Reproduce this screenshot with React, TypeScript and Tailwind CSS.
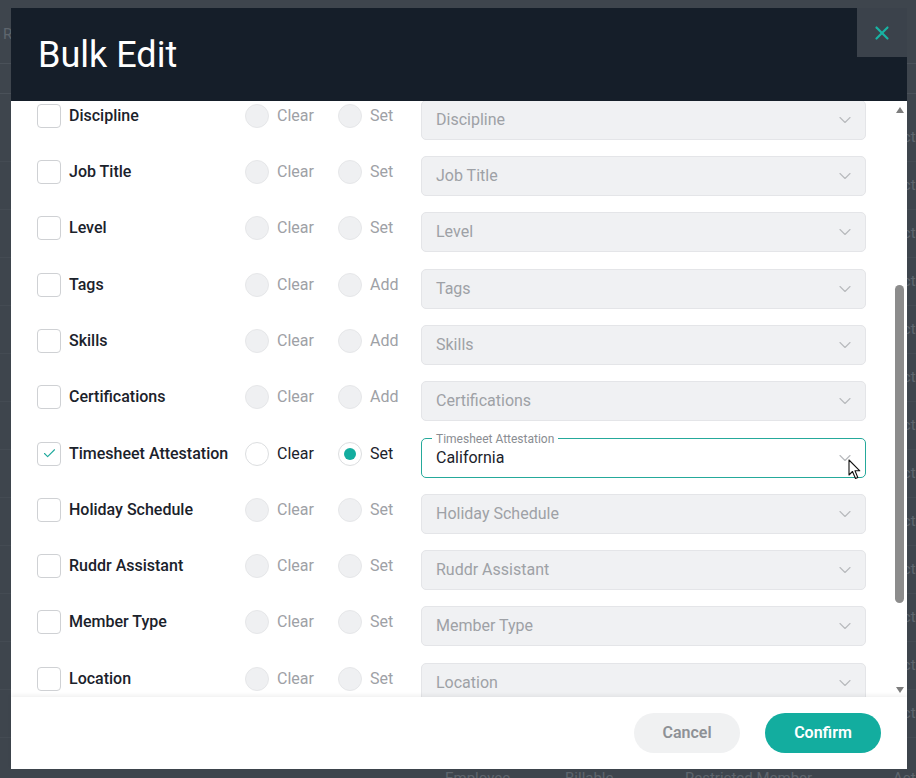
import { useLayoutEffect, useRef } from "react";
import { Check, ChevronDown, X } from "lucide-react";

type Field = {
  label: string;
  second: "Set" | "Add";
  active?: boolean;
  value?: string;
};

const fields: Field[] = [
  { label: "Role", second: "Set" },
  { label: "Practice", second: "Set" },
  { label: "Discipline", second: "Set" },
  { label: "Job Title", second: "Set" },
  { label: "Level", second: "Set" },
  { label: "Tags", second: "Add" },
  { label: "Skills", second: "Add" },
  { label: "Certifications", second: "Add" },
  { label: "Timesheet Attestation", second: "Set", active: true, value: "California" },
  { label: "Holiday Schedule", second: "Set" },
  { label: "Ruddr Assistant", second: "Set" },
  { label: "Member Type", second: "Set" },
  { label: "Location", second: "Set" },
  { label: "Cost Center", second: "Set" },
  { label: "Manager", second: "Set" },
];

const Radio = ({ enabled, checked, text }: { enabled: boolean; checked: boolean; text: string }) => (
  <div className="flex items-center gap-2">
    <span
      className={`flex h-6 w-6 items-center justify-center rounded-full border ${
        enabled ? "border-[#dcdee0] bg-white" : "border-[#e6e7e9] bg-[#eff0f2]"
      }`}
    >
      {checked && <span className="h-3 w-3 rounded-full bg-[#13ad9f]" />}
    </span>
    <span className={`text-[16px] ${enabled ? "text-[#1b222b]" : "text-[#9ea1a6]"}`}>{text}</span>
  </div>
);

const Cursor = () => (
  <svg className="absolute left-[426px] top-[20px]" width="14" height="21" viewBox="0 0 14 21">
    <path
      d="M1 1 L1 16 L4.5 12.5 L7.5 19.5 L9.8 18.5 L7 11.8 L11.8 11.8 Z"
      fill="#fff"
      stroke="#111"
      strokeWidth="1.1"
      strokeLinejoin="round"
    />
  </svg>
);

const Row = ({ f }: { f: Field }) => {
  const on = !!f.active;
  return (
    <div className="grid h-[56.3px] grid-cols-[208px_93px_83px_445px] items-center">
      <div className="flex items-center gap-2">
        <span className="flex h-6 w-6 items-center justify-center rounded-[4px] border border-[#cfd1d4] bg-white">
          {on && <Check size={15} strokeWidth={1.75} className="text-[#1fa99c]" />}
        </span>
        <span className="text-[16px] font-medium text-[#1b222b]">{f.label}</span>
      </div>
      <Radio enabled={on} checked={false} text="Clear" />
      <Radio enabled={on} checked={on} text={f.second} />
      {on ? (
        <div className="relative mt-2 flex h-10 items-center rounded-[5px] border border-[#25a99b] bg-white pl-[14px] pr-[10px]">
          <span className="absolute left-[10px] top-[-8px] bg-white px-1 text-[12px] leading-4 text-[#8a8d92]">
            Timesheet Attestation
          </span>
          <span className="flex-1 text-[16px] text-[#1b222b]">{f.value}</span>
          <ChevronDown size={20} strokeWidth={1.4} className="text-[#b9bbbe]" />
          <Cursor />
        </div>
      ) : (
        <div className="mt-2 flex h-10 items-center rounded-[5px] border border-[#e4e5e8] bg-[#f0f1f3] pl-[14px] pr-[10px]">
          <span className="flex-1 text-[16px] text-[#9ea1a6]">{f.label}</span>
          <ChevronDown size={20} strokeWidth={1.4} className="text-[#b9bbbe]" />
        </div>
      )}
    </div>
  );
};

const bgRows = Array.from({ length: 13 });

export default function App() {
  const listRef = useRef<HTMLDivElement>(null);

  useLayoutEffect(() => {
    if (listRef.current) listRef.current.scrollTop = 142;
  }, []);

  return (
    <div
      className="relative h-[778px] w-[916px] overflow-hidden bg-[#3e454d] text-[16px]"
      style={{ fontFamily: "Roboto, 'Liberation Sans', sans-serif" }}
    >
      {/* page behind the overlay */}
      <div className="flex flex-col text-[#5e656d]">
        <div className="flex h-[64px] items-end border-b border-[#4a5159] pb-[18px] pl-[3px] text-[15px]">Ri</div>
        <div className="h-[30px] border-b border-[#4a5159]" />
        <div className="h-[20px]" />
        {bgRows.map((_, i) => (
          <div key={i} className="flex h-12 items-center border-b border-[#444b53] pl-[893px] text-[15px]">
            Active
          </div>
        ))}
        <div className="grid grid-cols-[445px_120px_120px_208px_1fr] pt-[32px] text-[15px] leading-4">
          <span />
          <span>Employee</span>
          <span>Billable</span>
          <span>Restricted Member</span>
          <span>Active</span>
        </div>
      </div>

      {/* modal */}
      <div className="absolute left-[11px] top-[8px] flex h-[761px] w-[896px] flex-col bg-white">
        <div className="flex h-[93px] shrink-0 items-start justify-between bg-[#151e29]">
          <h1 className="self-center pl-[27px] text-[36px] font-normal leading-[44px] text-white">Bulk Edit</h1>
          <button className="flex h-[49px] w-[50px] items-center justify-center bg-[#3b424b]">
            <X size={22} strokeWidth={2.4} className="text-[#19b3a3]" />
          </button>
        </div>

        <div className="flex min-h-0 flex-1">
          <div ref={listRef} className="min-w-0 flex-1 overflow-hidden">
            <div className="pb-6 pl-[26px] pt-4">
              {fields.map((f) => (
                <Row key={f.label} f={f} />
              ))}
            </div>
          </div>
          <div className="flex w-4 shrink-0 flex-col items-center pb-[4px] pl-[1px] pt-[6px]">
            <span className="h-0 w-0 border-x-[4px] border-b-[6px] border-x-transparent border-b-[#7d7d7d]" />
            <span className="mt-[172px] h-[318px] w-[9px] rounded-full bg-[#8c8c8c]" />
            <span className="flex-1" />
            <span className="h-0 w-0 border-x-[4px] border-t-[6px] border-x-transparent border-t-[#7d7d7d]" />
          </div>
        </div>

        <div className="relative flex h-[72px] shrink-0 items-center justify-end gap-[25px] pr-[26px] shadow-[0_-2px_4px_rgba(0,0,0,0.06)]">
          <button className="h-10 w-[106px] rounded-full bg-[#f0f1f2] text-[16px] font-semibold text-[#8e9196]">
            Cancel
          </button>
          <button className="h-10 w-[116px] rounded-full bg-[#13ad9f] text-[16px] font-semibold text-white">
            Confirm
          </button>
        </div>
      </div>
    </div>
  );
}
